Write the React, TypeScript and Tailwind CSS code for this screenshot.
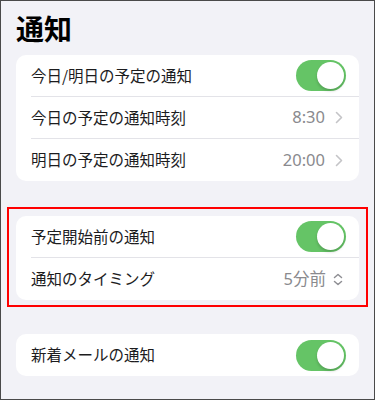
import React from 'react';

const font = { fontFamily: '"Noto Sans CJK JP", "Noto Sans", sans-serif' };
const valueFont = { fontFamily: '"Noto Sans", "Noto Sans CJK JP", sans-serif' };

const Toggle: React.FC = () => (
  <div className="relative h-[31px] w-[50px] shrink-0 rounded-full bg-[#65c466]">
    <div className="absolute right-[2px] top-[2px] h-[27px] w-[27px] rounded-full bg-white shadow-[0_2px_3px_rgba(0,0,0,0.18)]" />
  </div>
);

const Chevron: React.FC = () => (
  <svg width="8" height="13" viewBox="0 0 8 13" className="ml-[10px] shrink-0">
    <path d="M1.5 1.5 L6.5 6.5 L1.5 11.5" fill="none" stroke="#c4c4c7" strokeWidth="1.6" strokeLinecap="round" strokeLinejoin="round" />
  </svg>
);

const UpDown: React.FC = () => (
  <svg width="10" height="13" viewBox="0 0 10 13" className="ml-[7px] shrink-0">
    <path d="M1.5 4.5 L5 1.5 L8.5 4.5 M1.5 8.5 L5 11.5 L8.5 8.5" fill="none" stroke="#8e8e93" strokeWidth="1.5" strokeLinecap="round" strokeLinejoin="round" />
  </svg>
);

interface RowProps {
  label: string;
  right: React.ReactNode;
  last?: boolean;
  toggle?: boolean;
}

const Row: React.FC<RowProps> = ({ label, right, last, toggle }) => (
  <div className="pl-[15px]">
    <div className={`flex h-[42px] items-center justify-between ${toggle ? 'pr-[13px]' : 'pr-[16px]'} ${last ? '' : 'border-b border-[#e3e3e8]'}`}>
      <span className="text-[15.5px] text-[#1c1c1e]">{label}</span>
      {right}
    </div>
  </div>
);

const Value: React.FC<{ text: string; icon: React.ReactNode }> = ({ text, icon }) => (
  <div className="flex items-center">
    <span style={valueFont} className="text-[16.5px] text-[#8a8a8e]">{text}</span>
    {icon}
  </div>
);

export default function App() {
  return (
    <div style={font} className="box-border h-[400px] w-[375px] overflow-hidden border border-[#4a4a4a] bg-[#f2f2f7] px-[6px]">
      <h1 className="mx-[9px] pt-[8px] text-[28px] font-bold leading-[38px] text-black">通知</h1>

      <div className="mx-[9px] mt-[8px] overflow-hidden rounded-[10px] bg-white">
        <Row label="今日/明日の予定の通知" right={<Toggle />} toggle />
        <Row label="今日の予定の通知時刻" right={<Value text="8:30" icon={<Chevron />} />} />
        <Row label="明日の予定の通知時刻" right={<Value text="20:00" icon={<Chevron />} />} last />
      </div>

      <div className="mt-[26px] border-2 border-[#ff0000] px-[7px] pb-[5px] pt-[7px]">
        <div className="overflow-hidden rounded-[10px] bg-white">
          <Row label="予定開始前の通知" right={<Toggle />} toggle />
          <Row label="通知のタイミング" right={<Value text="5分前" icon={<UpDown />} />} last />
        </div>
      </div>

      <div className="mx-[9px] mt-[27px] overflow-hidden rounded-[10px] bg-white">
        <Row label="新着メールの通知" right={<Toggle />} toggle last />
      </div>
    </div>
  );
}
